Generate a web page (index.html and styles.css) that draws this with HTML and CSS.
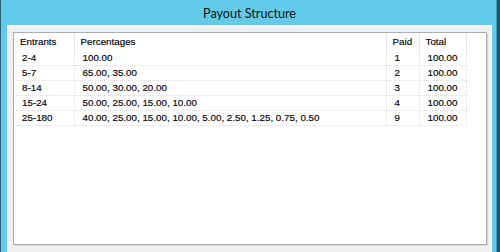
FILE: index.html
```html
<html>
    <head>
        <title>Payout Structure</title>
        <link rel="stylesheet" href="styles.css">
    </head>
    <body>
      <div class="window">
        <div class="caption">Payout Structure</div>
        <div class="client">
          <div class="list-view">
            <table class="grid">
              <colgroup>
                <col class="c-entrants">
                <col class="c-pct">
                <col class="c-paid">
                <col class="c-total">
                <col>
              </colgroup>
              <thead>
                <tr><th>Entrants</th><th>Percentages</th><th>Paid</th><th>Total</th><th></th></tr>
              </thead>
              <tbody>
                <tr><td>2-4</td><td>100.00</td><td>1</td><td>100.00</td><td class="pad"></td></tr>
                <tr><td>5-7</td><td>65.00, 35.00</td><td>2</td><td>100.00</td><td class="pad"></td></tr>
                <tr><td>8-14</td><td>50.00, 30.00, 20.00</td><td>3</td><td>100.00</td><td class="pad"></td></tr>
                <tr><td>15-24</td><td>50.00, 25.00, 15.00, 10.00</td><td>4</td><td>100.00</td><td class="pad"></td></tr>
                <tr><td>25-180</td><td>40.00, 25.00, 15.00, 10.00, 5.00, 2.50, 1.25, 0.75, 0.50</td><td>9</td><td>100.00</td><td class="pad"></td></tr>
              </tbody>
            </table>
          </div>
        </div>
      </div>
    </body>
</html>
```

FILE: styles.css
```css
html, body { margin:0; padding:0; }
body { width:500px; height:252px; overflow:hidden; background:#62cbea; }

/* window frame: thin dark edge, cyan border, caption on top */
.window {
  box-sizing:border-box;
  width:500px; height:252px;
  display:flex; flex-direction:column;
  border-left:1px solid #2f5f78;
  border-right:3px solid #2c4f63;
  box-shadow:inset -1px 0 0 #3f9fc0;
  background:#62cbea;
  padding:0 5px 0 6px;
}

.caption {
  height:25px;
  flex:none;
  display:flex; align-items:center; justify-content:center;
  font-family:Lato, "Liberation Sans", sans-serif;
  font-size:12.6px;
  color:#111;
  padding-top:1px;
  box-sizing:border-box;
}

.client {
  flex:1;
  background:#f0f0f0;
  border-top:1px solid #fbfbfb;
  border-left:1px solid #fbfbfb;
  border-right:1px solid #fbfbfb;
  padding:6px 4px 7px 5px;
  display:flex;
}

.list-view {
  flex:1;
  background:#fff;
  border:1px solid #adadad;
  box-shadow:1px 1px 0 #d6d6d6;
  overflow:hidden;
}

.grid {
  border-collapse:collapse;
  table-layout:fixed;
  width:100%;
  font-family:"Liberation Sans", Arial, sans-serif;
  font-size:9.8px;
  color:#000;
  -webkit-text-stroke:0.15px #000;
}

.c-entrants { width:60px; }
.c-pct { width:312px; }
.c-paid { width:33px; }
.c-total { width:47px; }

.grid th {
  height:17px;
  padding:0 0 1px 6px;
  text-align:left;
  font-weight:normal;
  border-right:1px solid #e5e5e5;
  white-space:nowrap;
}
.grid th:last-child { border-right:none; }

.grid td {
  height:15px;
  padding:0 0 0 8px;
  border-right:1px dotted #dcdcdc;
  border-bottom:1px dotted #dcdcdc;
  white-space:nowrap;
  overflow:hidden;
}
.grid td.pad { border:none; }
```
